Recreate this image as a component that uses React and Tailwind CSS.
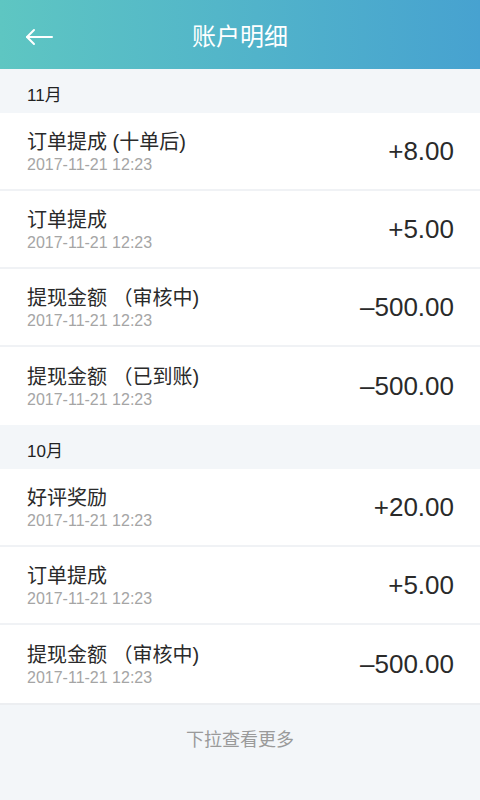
import React from "react";

const groups = [
  {
    month: "11月",
    items: [
      { title: "订单提成 (十单后)", time: "2017-11-21 12:23", amount: "+8.00" },
      { title: "订单提成", time: "2017-11-21 12:23", amount: "+5.00" },
      { title: "提现金额 （审核中)", time: "2017-11-21 12:23", amount: "–500.00" },
      { title: "提现金额 （已到账)", time: "2017-11-21 12:23", amount: "–500.00" },
    ],
  },
  {
    month: "10月",
    items: [
      { title: "好评奖励", time: "2017-11-21 12:23", amount: "+20.00" },
      { title: "订单提成", time: "2017-11-21 12:23", amount: "+5.00" },
      { title: "提现金额 （审核中)", time: "2017-11-21 12:23", amount: "–500.00" },
    ],
  },
];

const App = () => {
  return (
    <div
      className="w-[480px] h-[800px] overflow-hidden bg-[#f3f6f9] flex flex-col"
      style={{ fontFamily: '"Liberation Sans", "Noto Sans CJK SC", sans-serif' }}
    >
      <header className="h-[69px] shrink-0 flex items-center relative bg-gradient-to-r from-[#5ec6c2] to-[#47a2d0] text-white">
        <svg
          className="ml-[25px] mt-[4px]"
          width="29"
          height="18"
          viewBox="0 0 29 18"
          fill="none"
          stroke="white"
          strokeWidth="2"
          strokeLinecap="round"
          strokeLinejoin="round"
        >
          <path d="M27 9H2" />
          <path d="M9 2L2 9l7 7" />
        </svg>
        <h1 className="absolute inset-x-0 top-[20px] text-center text-[24px] leading-[34px] pointer-events-none">
          账户明细
        </h1>
      </header>

      {groups.map((g) => (
        <section key={g.month}>
          <div className="h-[44px] flex items-center pt-[9px] pl-[27px] text-[17px] text-[#222]">
            {g.month}
          </div>
          <ul className="bg-white">
            {g.items.map((it, i) => (
              <li
                key={i}
                className={
                  "h-[78px] flex items-center justify-between pl-[27px] pr-[26px] " +
                  (i < g.items.length - 1 ? "border-b-2 border-[#f0f2f5]" : "")
                }
              >
                <div className="flex flex-col pt-[2px]">
                  <span className="text-[20px] leading-[24px] text-[#2a2a2a]">{it.title}</span>
                  <span className="text-[16px] leading-[21px] text-[#a5a5a5]">{it.time}</span>
                </div>
                <span className="text-[26px] text-[#2a2a2a]">{it.amount}</span>
              </li>
            ))}
          </ul>
        </section>
      ))}

      <div className="h-[2px] bg-[#eceef1]" />
      <div className="pt-[22px] text-center text-[18px] text-[#9a9a9a]">
        下拉查看更多
      </div>
    </div>
  );
};

export default App;
